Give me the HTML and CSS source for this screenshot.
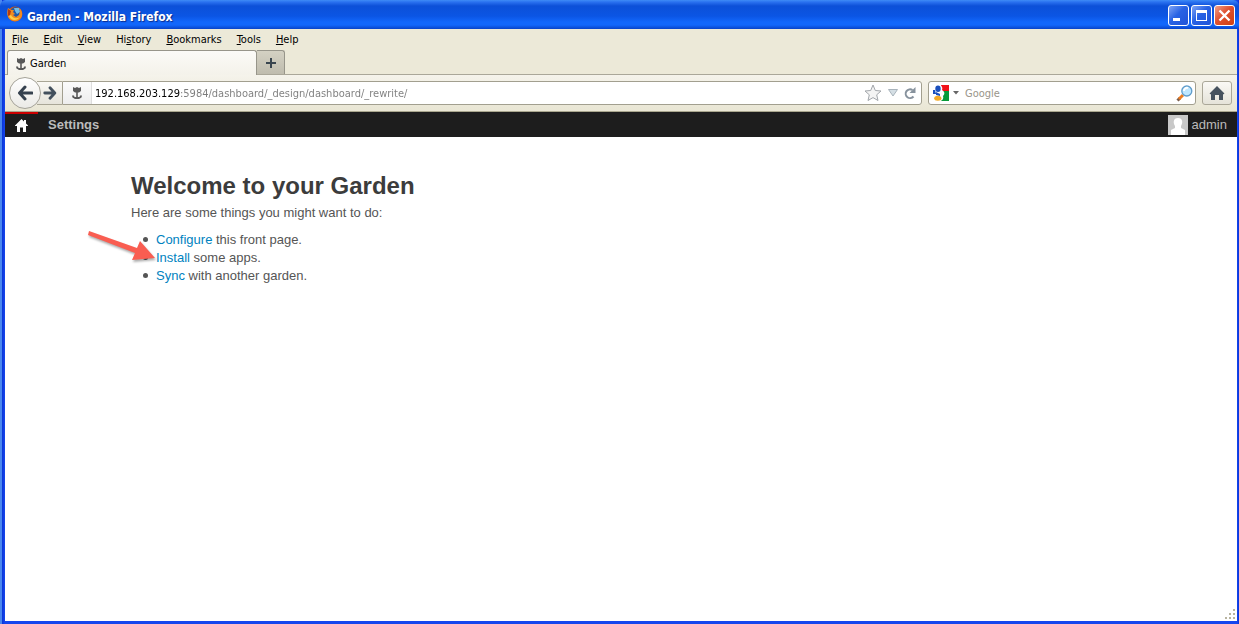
FILE: index.html
```html
<!DOCTYPE html>
<html lang="en">
<head>
<meta charset="utf-8">
<title>Garden</title>
<link rel="stylesheet" href="styles.css">
</head>
<body>
<svg class="defs" width="0" height="0" aria-hidden="true">
  <symbol id="tulip" viewBox="0 0 12 12"><path d="M2 0 4 1 6 0 8 1 10 0V4L8 5.5H6.8V10H8.5L9 8.5H11L10.5 10.5 8 12H4L1.5 10.5 1 8.5H3L3.5 10H5.2V5.5H4L2 4Z" fill="#585858"/></symbol>
  <symbol id="arrow" viewBox="0 0 16 16"><path d="M8 2 2.5 8 8 14M3 8H15" fill="none" stroke="#36424f" stroke-width="3" stroke-linejoin="round" stroke-linecap="round"/></symbol>
</svg>
<div class="window">
  <header class="titlebar">
    <svg class="firefox" viewBox="0 0 16 16" width="16" height="16" aria-hidden="true">
      <circle cx="8" cy="8" r="7.4" fill="#d85b10"/>
      <circle cx="8.5" cy="6.5" r="5.4" fill="#2359a5"/>
      <path d="M7 2 12 2 13 6 10 8 8 5Z" fill="#70bde8"/>
      <path d="M1 2 4 4 7 4 6 6 8 8 6 9 9 11 12 9 13 5 12 2C16 5 16 10 13 13 9 17 3 15 1 11 0 8 0 5 1 2Z" fill="#f18b20"/>
      <path d="M2 10C4 15 10 15 13 11 10 13 6 13 4 9Z" fill="#ffcf45"/>
      <path d="M1 3 4 5 3 9 1 10Z" fill="#b83a0e"/>
    </svg>
    <span class="window-title">Garden - Mozilla Firefox</span>
    <div class="window-buttons">
      <button class="winbtn" aria-label="Minimize"><svg viewBox="0 0 19 19"><path d="M4 12H11V15H4Z" fill="#fff"/></svg></button>
      <button class="winbtn" aria-label="Maximize"><svg viewBox="0 0 19 19"><path d="M4 4H15V15H4ZM5 7V14H14V7Z" fill="#fff" fill-rule="evenodd"/></svg></button>
      <button class="winbtn close" aria-label="Close"><svg viewBox="0 0 19 19"><path d="M4.500 4.500 14.500 14.500M14.500 4.500 4.500 14.500" stroke="#fff" stroke-width="2.4"/></svg></button>
    </div>
  </header>
  <nav class="menubar" aria-label="Menu">
    <button><u>F</u>ile</button><button><u>E</u>dit</button><button><u>V</u>iew</button><button>Hi<u>s</u>tory</button><button><u>B</u>ookmarks</button><button><u>T</u>ools</button><button><u>H</u>elp</button>
  </nav>
  <div class="tabs">
    <button class="tab"><svg width="12" height="12"><use href="#tulip"/></svg>Garden</button>
    <button class="newtab" aria-label="New tab"><svg width="10" height="10" viewBox="0 0 10 10"><path d="M5 0V10M0 5H10" stroke="#39454f" stroke-width="2"/></svg></button>
  </div>
  <div class="navbar">
    <button class="back" aria-label="Back"><svg width="16" height="16"><use href="#arrow"/></svg></button>
    <button class="forward" aria-label="Forward"><svg width="14" height="14" viewBox="0 0 16 16"><path d="M8 2 13.5 8 8 14M13 8H2" fill="none" stroke="#43505d" stroke-width="3.2" stroke-linejoin="round" stroke-linecap="round"/></svg></button>
    <div class="urlbar">
      <span class="identity"><svg width="12" height="12"><use href="#tulip"/></svg></span>
      <input class="url" type="text" aria-label="Address" value="192.168.203.129:5984/dashboard/_design/dashboard/_rewrite/">
      <button class="plain" aria-label="Bookmark"><svg width="18" height="18" viewBox="0 0 18 18"><path d="M9 1 11.3 6.5 17 7 12.7 10.8 14 16.5 9 13.6 4 16.5 5.3 10.8 1 7 6.7 6.5Z" fill="#f4f4f4" stroke="#a2a6ab" stroke-linejoin="round"/></svg></button>
      <button class="plain" aria-label="History list"><svg width="10" height="8" viewBox="0 0 10 8"><path d="M.5 .5H9.5L5 7Z" fill="#d5dfe5" stroke="#a8b3bb"/></svg></button>
      <button class="plain" aria-label="Reload"><svg width="12" height="13" viewBox="0 0 12 13"><path d="M9.5 9.5A4.4 4.4 0 1 1 8.5 3" fill="none" stroke="#87929d" stroke-width="2"/><path d="M11.5 0V6H5.5Z" fill="#87929d"/></svg></button>
    </div>
    <div class="search">
      <button class="plain engine" aria-label="Search engine"><svg width="16" height="16" viewBox="0 0 16 16"><path d="M0 0H8V16H0Z" fill="#fff"/><path d="M8 0H16V6H9Z" fill="#f11218"/><path d="M9 6H16V16H8Z" fill="#089b39"/><path d="M0 5H3V9H0Z" fill="#1b50bd"/><path d="M5 0C9 0 10 3 9 5 12 7 12 9 10 11 11 14 9 16 6 16H3C6 11 2 9 2 4Z" fill="#fff"/><ellipse cx="5" cy="3.7" rx="2.7" ry="3.3" fill="#1b50bd"/><path d="M3 7 7 9V11L3 10Z" fill="#1b50bd"/><ellipse cx="4.8" cy="13.2" rx="3.6" ry="2.5" fill="#f4aa25"/></svg><svg width="6" height="4" viewBox="0 0 6 4"><path d="M0 0H6L3 3.5Z" fill="#666"/></svg></button>
      <input class="query" type="text" aria-label="Search" placeholder="Google">
      <button class="plain" aria-label="Search"><svg width="17" height="17" viewBox="0 0 17 17"><path d="M1.5 15.5 4 13" stroke="#7b5d4c" stroke-width="3"/><path d="M3 14 7 10" stroke="#ec7c20" stroke-width="3"/><circle cx="10.8" cy="6" r="5" fill="#bfe7ff" stroke="#5f9ccb" stroke-width="1.3"/><path d="M8 6A3 3 0 0 1 12 3" stroke="#fff" stroke-width="2" fill="none"/></svg></button>
    </div>
    <button class="home" aria-label="Home"><svg width="16" height="14" viewBox="0 0 16 14"><path d="M8 0 15.5 7.5 14 8.5V14H10V9H6V14H2V8.5L.5 7.5Z" fill="#46525e"/></svg></button>
  </div>
  <div class="sitebar">
    <a class="sitehome" href="#" aria-label="Home"><svg width="13" height="13" viewBox="0 0 13 13"><path d="M6.5 0 9 2.5V1H11V4.5L13 6.5V7H11V13H8V8.5H5V13H2V7H0V6.5Z" fill="#fff"/></svg></a>
    <a class="settings" href="#">Settings</a>
    <a class="user" href="#"><svg width="20" height="20" viewBox="0 0 20 20"><path d="M0 0H20V20H0Z" fill="#c8c8c8"/><path d="M10 3C15 3 15 8 13 11V13L17 15V20H3V15L7 13V11C5 8 5 3 10 3Z" fill="#fff"/></svg>admin</a>
  </div>
  <main class="content">
    <h1>Welcome to your Garden</h1>
    <p>Here are some things you might want to do:</p>
    <ul>
      <li><a href="#">Configure</a> this front page.</li>
      <li class="marked"><a href="#">Install</a> some apps.
        <svg class="pointer" width="72" height="38" viewBox="0 0 72 38" aria-hidden="true"><path d="M2 2 1 6 48 24 45 31 68 29 53 12 50 19Z" fill="#f95d51"/></svg></li>
      <li><a href="#">Sync</a> with another garden.</li>
    </ul>
  </main>
  <svg class="grip" width="10" height="10" viewBox="0 0 10 10" aria-hidden="true"><path d="M8 0h2v2h-2zM4 4h2v2h-2zM8 4h2v2h-2zM0 8h2v2h-2zM4 8h2v2h-2zM8 8h2v2h-2z" fill="#b8b4a0"/></svg>
</div>
</body>
</html>
```
FILE: styles.css
```css
* { box-sizing: border-box; }
body { margin: 0; font: 11px/14px "DejaVu Sans Condensed", Tahoma, sans-serif; color: #000; }
button { font: inherit; color: inherit; border: 0; background: none; padding: 0; margin: 0; }
svg { display: block; flex: none; }
.defs { position: absolute; }
.window {
  position: relative;
  display: flex;
  flex-direction: column;
  min-height: 100vh;
  padding: 0 2px 3px 5px;
  background: linear-gradient(90deg, #4a87ef 0, #4a87ef 2px, #0a35d8 2px, #1546ee 5px, #1546ee calc(100% - 2px), #0a35d8 100%);
}
.titlebar {
  display: flex;
  align-items: center;
  height: 29px;
  margin: 0 -2px 0 -5px;
  padding: 2px 4px 0 7px;
  gap: 4px;
  border-radius: 6px 6px 0 0;
  background: linear-gradient(#3f8cf6 0, #2a72f0 2px, #0c50d8 6px, #0b55e4 16px, #1267fb 22px, #1267fb 25px, #0843c8 29px);
}
.firefox { margin-bottom: 3px; }
.window-title { flex: 1; padding-top: 2px; font: bold 12px/16px "DejaVu Sans Condensed", "Trebuchet MS", sans-serif; color: #fff; text-shadow: 1px 1px 1px #0b2c8c; }
.window-buttons { display: flex; gap: 2px; }
.winbtn { width: 21px; height: 21px; border: 1px solid #fff; border-radius: 3px; background: linear-gradient(135deg, #80a5f5, #2862e4 45%, #2054d8); }
.close { background: linear-gradient(135deg, #f0a088, #df5030 45%, #cf4010); }
.menubar { display: flex; gap: 15px; padding: 4px 7px 3px; background: #ece9d8; }
.menubar u { text-underline-offset: 1px; }
.tabs { display: flex; align-items: flex-end; height: 25px; padding-left: 2px; background: #ece9d8; border-bottom: 1px solid #aaa799; }
.tab { display: flex; align-items: center; gap: 3px; width: 250px; height: 25px; margin-bottom: -1px; padding: 2px 7px 0; border: 1px solid #97958a; border-bottom: 0; border-radius: 3px 3px 0 0; background: linear-gradient(#fbfaf7, #f4f2ea); }
.newtab { display: grid; place-items: center; width: 28px; height: 24px; border: 1px solid #97958a; border-left: 0; border-bottom: 0; border-radius: 0 3px 0 0; background: linear-gradient(#d4d1c3, #bfbcae); }
.navbar { display: flex; align-items: center; height: 37px; padding: 0 5px 0 4px; border-bottom: 1px solid #aaa78f; background: linear-gradient(#f5f3eb, #e9e6d4); }
.back { z-index: 1; display: grid; place-items: center; width: 32px; height: 32px; border: 1px solid #a5a399; border-radius: 50%; background: linear-gradient(#fff, #ebeae6); }
.forward { display: grid; place-items: center; width: 25px; height: 24px; margin-left: -4px; border: 1px solid #a9a696; border-width: 1px 0; background: linear-gradient(#faf9f5, #e6e4db); }
.urlbar, .search { display: flex; align-items: center; height: 24px; border: 1px solid #a29f8f; border-radius: 0 3px 3px 0; background: #fff; }
.urlbar { flex: 1; min-width: 0; gap: 6px; padding-right: 5px; }
.identity { display: grid; place-items: center; width: 29px; height: 22px; border-right: 1px solid #ddd; background: linear-gradient(#fbfbfb, #ededed); }
input { min-width: 0; border: 0; padding: 2px 0 0; margin: 0; outline: 0; font: 11px/16px "DejaVu Sans Condensed", Tahoma, sans-serif; }
.url { flex: 1; margin-left: -3px; background: linear-gradient(90deg, #000 85px, #7c7c7c 85px); -webkit-background-clip: text; background-clip: text; -webkit-text-fill-color: transparent; }
.search { width: 268px; margin: 0 6px; padding: 0 2px 0 4px; border-radius: 3px; }
.engine { display: flex; align-items: center; gap: 4px; }
.query { flex: 1; margin-left: 6px; background: transparent; }
.query::placeholder { color: #99958a; opacity: 1; }
.home { display: grid; place-items: center; width: 30px; height: 24px; border: 1px solid #aaa798; border-radius: 3px; background: linear-gradient(#faf9f5, #e5e3d9); }
.sitebar { display: flex; height: 25px; background: #1d1d1d; font: 13px/26px "Liberation Sans", Arial, sans-serif; }
.sitebar a { color: #bbb; text-decoration: none; }
.sitehome { display: grid; place-items: center; width: 33px; border-top: 2px solid #c00; }
.settings { padding-left: 10px; font-weight: bold; }
.sitebar .user { display: flex; align-items: center; gap: 4px; margin-left: auto; padding-right: 10px; }
.content { flex: 1; padding: 36px 126px; background: #fff; color: #555; font: 13px/18px "Liberation Sans", Arial, sans-serif; }
h1 { margin: 0; font-size: 24px; line-height: 26px; color: #3c3c3c; }
p { margin: 5px 0 9px; }
ul { margin: 0; padding-left: 25px; list-style: none; }
li::before { content: ""; display: inline-block; width: 5px; height: 5px; margin: 0 8px 0 -13px; border-radius: 50%; background: #555; vertical-align: 2px; }
.content a { color: #0082c0; text-decoration: none; }
.marked { position: relative; }
.pointer { position: absolute; left: -69px; top: -20px; filter: drop-shadow(1px 2px 1px #0005); }
.grip { position: absolute; right: 4px; bottom: 5px; }
```
